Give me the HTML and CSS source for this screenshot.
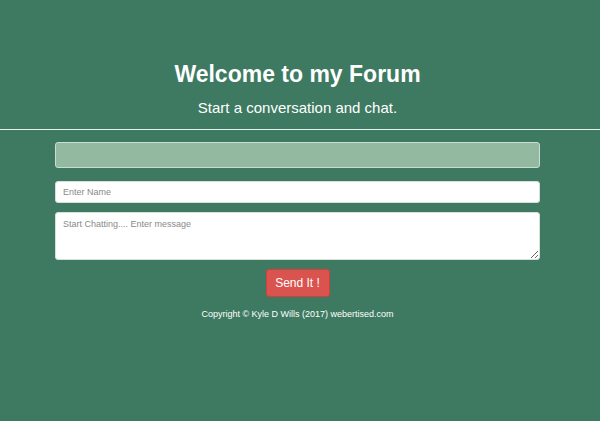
FILE: index.html
```html
<!DOCTYPE html>
<html>
<head>
<meta charset="utf-8">
<link rel="stylesheet" href="styles.css">
</head>
<body>
<header class="hero">
  <h1 class="title">Welcome to my Forum</h1>
  <p class="subtitle">Start a conversation and chat.</p>
</header>
<hr class="rule">
<main class="wrap">
  <div class="messages"></div>
  <input class="field" type="text" placeholder="Enter Name">
  <textarea class="field area" placeholder="Start Chatting.... Enter message"></textarea>
  <div class="actions"><button class="send">Send It !</button></div>
  <p class="copy">Copyright © Kyle D Wills (2017) webertised.com</p>
</main>
</body>
</html>
```

FILE: styles.css
```css
html, body {
  margin: 0;
  padding: 0;
  background: #3d7a61;
  font-family: "Liberation Sans", Arial, sans-serif;
  color: #fff;
  height: 100%;
}
.hero {
  text-align: center;
  padding: 60px 0 0 0;
  width: 595px;
}
.title {
  margin: 0;
  font-size: 23px;
  line-height: 28px;
  font-weight: bold;
}
.subtitle {
  margin: 10px 0 0 0;
  font-size: 15px;
  line-height: 20px;
}
.rule {
  margin: 11px 0 0 0;
  border: 0;
  border-top: 1px solid #e8f0ec;
  height: 0;
}
.wrap {
  width: 485px;
  margin: 12px 0 0 55px;
  display: flex;
  flex-direction: column;
}
.messages {
  height: 24px;
  background: #93b9a0;
  border: 1px solid #c9ddd0;
  border-radius: 3px;
}
.field {
  box-sizing: border-box;
  width: 485px;
  height: 22px;
  margin-top: 13px;
  border: 1px solid #d6e0da;
  border-radius: 3px;
  background: #fff;
  font-family: "Liberation Sans", Arial, sans-serif;
  font-size: 9px;
  padding: 0 7px;
  color: #555;
}
.field::placeholder { color: #8a8a8a; }
.area {
  height: 48px;
  margin-top: 9px;
  padding: 6px 7px;
  resize: vertical;
}
.actions {
  display: flex;
  justify-content: center;
  margin-top: 9px;
}
.send {
  width: 64px;
  height: 28px;
  background: #d9534f;
  color: #fff;
  border: 1px solid #d43f3a;
  border-radius: 3px;
  font-family: "Liberation Sans", Arial, sans-serif;
  font-size: 12px;
  padding: 0;
}
.copy {
  margin: 12px 0 0 0;
  text-align: center;
  font-size: 9px;
}
```
